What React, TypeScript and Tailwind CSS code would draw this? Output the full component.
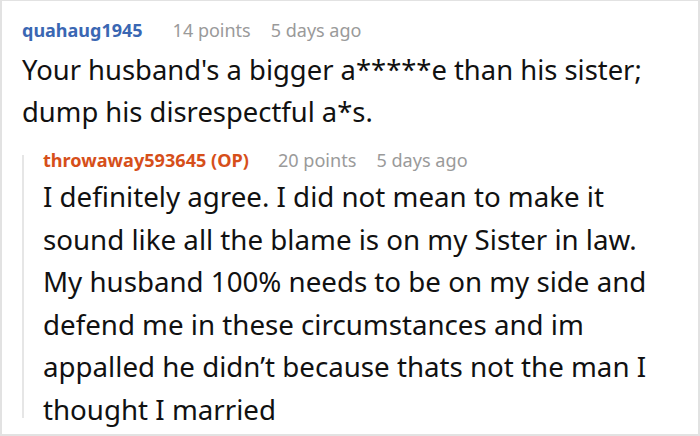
import React from "react";

export default function App() {
  return (
    <div
      className="w-[700px] h-[436px] bg-white border-t border-l-2 border-r-2 border-b-2 border-[#e2e2e2] overflow-hidden"
      style={{ fontFamily: '"Noto Sans", "Open Sans", sans-serif' }}
    >
      <div className="pl-[20px] pt-[18px]">
        <div className="h-[22px] flex items-center text-[18px] leading-none">
          <span className="font-bold text-[#3a67b3]">quahaug1945</span>
          <span className="ml-[30px] text-[#9a9a9a]">14 points</span>
          <span className="ml-[20px] text-[#9a9a9a]">5 days ago</span>
        </div>
        <div className="mt-[8px] text-[27.4px] leading-[42px] text-[#111] whitespace-nowrap">
          Your husband's a bigger a*****e than his sister;
          <br />
          dump his disrespectful a*s.
        </div>
        <div className="mt-[16px] flex">
          <div className="w-[2px] bg-[#e6e6e6] mt-[6px] mb-[12px] shrink-0" />
          <div className="ml-[19px]">
            <div className="h-[22px] flex items-center text-[18.1px] leading-none">
              <span className="font-bold text-[#d64f1a]">throwaway593645 (OP)</span>
              <span className="ml-[29px] text-[#9a9a9a]">20 points</span>
              <span className="ml-[20px] text-[#9a9a9a]">5 days ago</span>
            </div>
            <div className="mt-[4px] text-[27.7px] leading-[42.5px] text-[#111] whitespace-nowrap">
              I definitely agree. I did not mean to make it
              <br />
              sound like all the blame is on my Sister in law.
              <br />
              My husband 100% needs to be on my side and
              <br />
              defend me in these circumstances and im
              <br />
              appalled he didn’t because thats not the man I
              <br />
              thought I married
            </div>
          </div>
        </div>
      </div>
    </div>
  );
}
